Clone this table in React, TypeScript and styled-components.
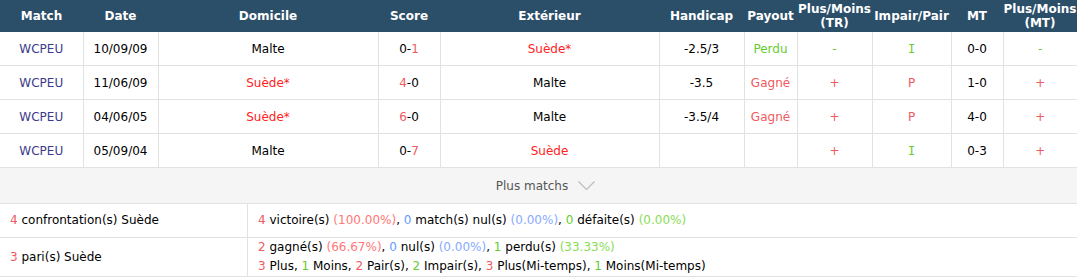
import React from 'react';
import styled, { createGlobalStyle } from 'styled-components';

const GlobalStyle = createGlobalStyle`
  html, body {
    margin: 0;
    padding: 0;
    background: #fff;
  }
  body {
    font-family: Tahoma, 'DejaVu Sans', Verdana, sans-serif;
    font-size: 12px;
    color: #000;
  }
`;

const RED = '#f22';
const PINK = '#f0595f';
const GREEN = '#6c3';
const BLUE = '#69f';

const Wrap = styled.div`
  width: 1077px;
  border-bottom: 1px solid #e2e2e2;
`;

const MatchTable = styled.table`
  width: 100%;
  border-collapse: collapse;
  table-layout: fixed;

  th {
    background: #2b4e69;
    color: #fff;
    font-weight: bold;
    font-size: 12px;
    height: 32px;
    line-height: 14px;
    padding: 0;
    text-align: center;
  }

  td {
    height: 33px;
    padding: 0;
    text-align: center;
    border: 1px solid #e2e2e2;
    border-top: 0;
  }

  td:first-child {
    border-left: 0;
  }
  td:last-child {
    border-right: 0;
  }
`;

const Tone = styled.span<{ $c?: string }>`
  color: ${(p) => p.$c || '#000'};
`;

const Serif = styled.span<{ $c: string }>`
  color: ${(p) => p.$c};
  font-family: 'DejaVu Sans Mono', monospace;
`;

const League = styled.span`
  color: #3d3a8c;
`;

const MoreBar = styled.div`
  height: 35px;
  background: #f5f5f5;
  border-bottom: 1px solid #e2e2e2;
  display: flex;
  align-items: center;
  justify-content: center;
  gap: 10px;
  padding-left: 14px;
  color: #555;
  font-size: 12px;

  svg {
    width: 17px;
    height: 9px;
  }
`;

const Summary = styled.div`
  display: grid;
  grid-template-columns: 248px 1fr;
  font-size: 12px;
`;

const Cell = styled.div<{ $h: number; $left?: boolean; $last?: boolean }>`
  height: ${(p) => p.$h}px;
  padding: 0 10px;
  display: flex;
  flex-direction: column;
  justify-content: center;
  border-right: ${(p) => (p.$left ? '1px solid #e2e2e2' : '0')};
  border-bottom: ${(p) => (p.$last ? '0' : '1px solid #e2e2e2')};
  line-height: 19px;
`;

type Row = {
  date: string;
  home: React.ReactNode;
  score: React.ReactNode;
  away: React.ReactNode;
  hc: string;
  payout: React.ReactNode;
  tr: React.ReactNode;
  oe: React.ReactNode;
  mt: string;
  mtOu: React.ReactNode;
};

const malte = <Tone>Malte</Tone>;
const suedeStar = <Tone $c={RED}>Suède*</Tone>;

const rows: Row[] = [
  {
    date: '10/09/09',
    home: malte,
    score: (<><Tone>0-</Tone><Tone $c={PINK}>1</Tone></>),
    away: suedeStar,
    hc: '-2.5/3',
    payout: <Tone $c={GREEN}>Perdu</Tone>,
    tr: <Tone $c={GREEN}>-</Tone>,
    oe: <Serif $c={GREEN}>I</Serif>,
    mt: '0-0',
    mtOu: <Tone $c={GREEN}>-</Tone>,
  },
  {
    date: '11/06/09',
    home: suedeStar,
    score: (<><Tone $c={PINK}>4</Tone><Tone>-0</Tone></>),
    away: malte,
    hc: '-3.5',
    payout: <Tone $c={PINK}>Gagné</Tone>,
    tr: <Tone $c={PINK}>+</Tone>,
    oe: <Tone $c={PINK}>P</Tone>,
    mt: '1-0',
    mtOu: <Tone $c={PINK}>+</Tone>,
  },
  {
    date: '04/06/05',
    home: suedeStar,
    score: (<><Tone $c={PINK}>6</Tone><Tone>-0</Tone></>),
    away: malte,
    hc: '-3.5/4',
    payout: <Tone $c={PINK}>Gagné</Tone>,
    tr: <Tone $c={PINK}>+</Tone>,
    oe: <Tone $c={PINK}>P</Tone>,
    mt: '4-0',
    mtOu: <Tone $c={PINK}>+</Tone>,
  },
  {
    date: '05/09/04',
    home: malte,
    score: (<><Tone>0-</Tone><Tone $c={PINK}>7</Tone></>),
    away: <Tone $c={RED}>Suède</Tone>,
    hc: '',
    payout: '',
    tr: <Tone $c={PINK}>+</Tone>,
    oe: <Serif $c={GREEN}>I</Serif>,
    mt: '0-3',
    mtOu: <Tone $c={PINK}>+</Tone>,
  },
];

const widths = [83, 75, 220, 62, 219, 85, 53, 75, 79, 52, 74];

export default function App() {
  return (
    <>
      <GlobalStyle />
      <Wrap>
        <MatchTable>
          <colgroup>
            {widths.map((w, i) => (
              <col key={i} style={{ width: w }} />
            ))}
          </colgroup>
          <thead>
            <tr>
              <th>Match</th>
              <th>Date</th>
              <th>Domicile</th>
              <th>Score</th>
              <th>Extérieur</th>
              <th>Handicap</th>
              <th>Payout</th>
              <th>Plus/Moins<br />(TR)</th>
              <th>Impair/Pair</th>
              <th>MT</th>
              <th>Plus/Moins<br />(MT)</th>
            </tr>
          </thead>
          <tbody>
            {rows.map((r) => (
              <tr key={r.date}>
                <td><League>WCPEU</League></td>
                <td>{r.date}</td>
                <td>{r.home}</td>
                <td>{r.score}</td>
                <td>{r.away}</td>
                <td>{r.hc}</td>
                <td>{r.payout}</td>
                <td>{r.tr}</td>
                <td>{r.oe}</td>
                <td>{r.mt}</td>
                <td>{r.mtOu}</td>
              </tr>
            ))}
          </tbody>
        </MatchTable>
        <MoreBar>
          Plus matchs
          <svg viewBox="0 0 17 9" fill="none" stroke="#bbb" strokeWidth="1.1">
            <path d="M0.5 0.5l8 8 8-8" />
          </svg>
        </MoreBar>
        <Summary>
          <Cell $h={33} $left>
            <div><Tone $c={PINK}>4</Tone> confrontation(s) Suède</div>
          </Cell>
          <Cell $h={33}>
            <div>
              <Tone $c={PINK}>4</Tone> victoire(s) <Tone $c="#f77">(100.00%)</Tone>,{' '}
              <Tone $c={BLUE}>0</Tone> match(s) nul(s) <Tone $c="#8af">(0.00%)</Tone>,{' '}
              <Tone $c={GREEN}>0</Tone> défaite(s) <Tone $c="#8d5">(0.00%)</Tone>
            </div>
          </Cell>
          <Cell $h={38} $left $last>
            <div><Tone $c={PINK}>3</Tone> pari(s) Suède</div>
          </Cell>
          <Cell $h={38} $last>
            <div>
              <Tone $c={PINK}>2</Tone> gagné(s) <Tone $c="#f77">(66.67%)</Tone>,{' '}
              <Tone $c={BLUE}>0</Tone> nul(s) <Tone $c="#8af">(0.00%)</Tone>,{' '}
              <Tone $c={GREEN}>1</Tone> perdu(s) <Tone $c="#8d5">(33.33%)</Tone>
            </div>
            <div>
              <Tone $c={PINK}>3</Tone> Plus, <Tone $c={GREEN}>1</Tone> Moins,{' '}
              <Tone $c={PINK}>2</Tone> Pair(s), <Tone $c={GREEN}>2</Tone> Impair(s),{' '}
              <Tone $c={PINK}>3</Tone> Plus(Mi-temps), <Tone $c={GREEN}>1</Tone> Moins(Mi-temps)
            </div>
          </Cell>
        </Summary>
      </Wrap>
    </>
  );
}
